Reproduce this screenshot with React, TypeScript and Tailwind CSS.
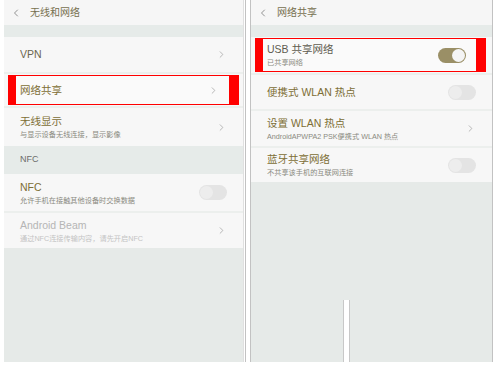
import { ChevronLeft, ChevronRight } from 'lucide-react'

const font = { fontFamily: '"Liberation Sans", "Noto Sans CJK SC", sans-serif' }

function Toggle({ on = false }: { on?: boolean }) {
  return on ? (
    <div className="w-[28px] h-[15px] rounded-full bg-[#9a8f66] flex items-center justify-end pr-[1px]">
      <div className="w-[13px] h-[13px] rounded-full bg-[#f4f4f4]" />
    </div>
  ) : (
    <div className="w-[28px] h-[15px] rounded-full bg-[#e4e4e4] flex items-center pl-[1px]">
      <div className="w-[13px] h-[13px] rounded-full bg-[#ededed]" />
    </div>
  )
}

function Chevron() {
  return <ChevronRight className="w-[11px] h-[11px] text-[#9a9a9a]" strokeWidth={1.5} />
}

interface RowProps {
  title: string
  sub?: string
  right: 'chevron' | 'on' | 'off'
  h: string
  muted?: boolean
  titleColor?: string
  highlight?: 'left' | 'right'
}

function Row({ title, sub, right, h, muted, titleColor = 'text-[#7d6e35]', highlight }: RowProps) {
  const inner = (
    <div className={`flex items-center justify-between ${highlight ? 'h-full bg-[#fafafa] pl-[4px] pr-[10px]' : 'px-[16px] ' + h}`}>
      <div className="flex flex-col">
        <span className={`text-[10.5px] leading-[15px] ${muted ? 'text-[#b5b5b5]' : titleColor}`}>{title}</span>
        {sub && (
          <span className={`text-[7.2px] leading-[11px] ${muted ? 'text-[#c4c4c4]' : 'text-[#8a8a80]'}`}>{sub}</span>
        )}
      </div>
      {right === 'chevron' ? <Chevron /> : <Toggle on={right === 'on'} />}
    </div>
  )
  if (highlight) {
    return (
      <div className={`${h} flex items-stretch py-[1px] ${highlight === 'left' ? 'px-[4px]' : 'pl-[4px] pr-[6px]'} bg-[#f7f7f7]`}>
        <div className="flex-1 flex border border-[#ff0000]">
          <div className="w-[7px] bg-[#ff0000]" />
          <div className="flex-1">{inner}</div>
          <div className="w-[9px] bg-[#ff0000]" />
        </div>
      </div>
    )
  }
  return <div className="bg-[#f7f7f7]">{inner}</div>
}

function Header({ title }: { title: string }) {
  return (
    <div className="h-[25px] bg-[#f6f6f6] flex items-center pl-[6px] gap-[8px]">
      <ChevronLeft className="w-[12px] h-[12px] text-[#777]" strokeWidth={1.6} />
      <span className="text-[10px] text-[#77704f]">{title}</span>
    </div>
  )
}

const Divider = () => <div className="h-[2px] bg-[#ecefed]" />

export default function App() {
  return (
    <div className="w-[502px] h-[367px] bg-white flex pl-[4px] pb-[5px]" style={font}>
      {/* left screen */}
      <div className="w-[240px] h-[362px] bg-[#e6eae8] flex flex-col border-r border-[#e0e0e0]">
        <Header title="无线和网络" />
        <div className="h-[12px] bg-[#e6ebe9]" />
        <Row title="VPN" right="chevron" h="h-[35px]" titleColor="text-[#6b6650]" />
        <Divider />
        <Row title="网络共享" right="chevron" h="h-[32px]" highlight="left" />
        <Divider />
        <Row title="无线显示" sub="与显示设备无线连接，显示影像" right="chevron" h="h-[38px]" />
        <div className="h-[28px] flex items-center px-[16px] bg-[#e6ebe9]">
          <span className="text-[9px] text-[#6b6b6b]">NFC</span>
        </div>
        <Row title="NFC" sub="允许手机在接触其他设备时交换数据" right="off" h="h-[37px]" />
        <Divider />
        <Row title="Android Beam" sub="通过NFC连接传输内容，请先开启NFC" right="chevron" h="h-[35px]" muted />
      </div>
      <div className="w-[5px] h-[362px] border-l border-[#c2c2c2] ml-[1px]" />
      {/* right screen */}
      <div className="w-[243px] h-[362px] bg-[#e6eae8] flex flex-col border-l border-[#c2c2c2] border-r">
        <Header title="网络共享" />
        <div className="h-[12px] bg-[#e6ebe9]" />
        <Row title="USB 共享网络" sub="已共享网络" right="on" h="h-[36px]" highlight="right" titleColor="text-[#5f5c50]" />
        <Divider />
        <Row title="便携式 WLAN 热点" right="off" h="h-[34px]" />
        <Divider />
        <Row title="设置 WLAN 热点" sub="AndroidAPWPA2 PSK便携式 WLAN 热点" right="chevron" h="h-[35px]" />
        <Divider />
        <Row title="蓝牙共享网络" sub="不共享该手机的互联网连接" right="off" h="h-[34px]" />
        <div className="flex-1 flex justify-start pl-[92px] items-end">
          <div className="w-[7px] h-[62px] bg-white border-x border-[#c8c8c8]" />
        </div>
      </div>
    </div>
  )
}
